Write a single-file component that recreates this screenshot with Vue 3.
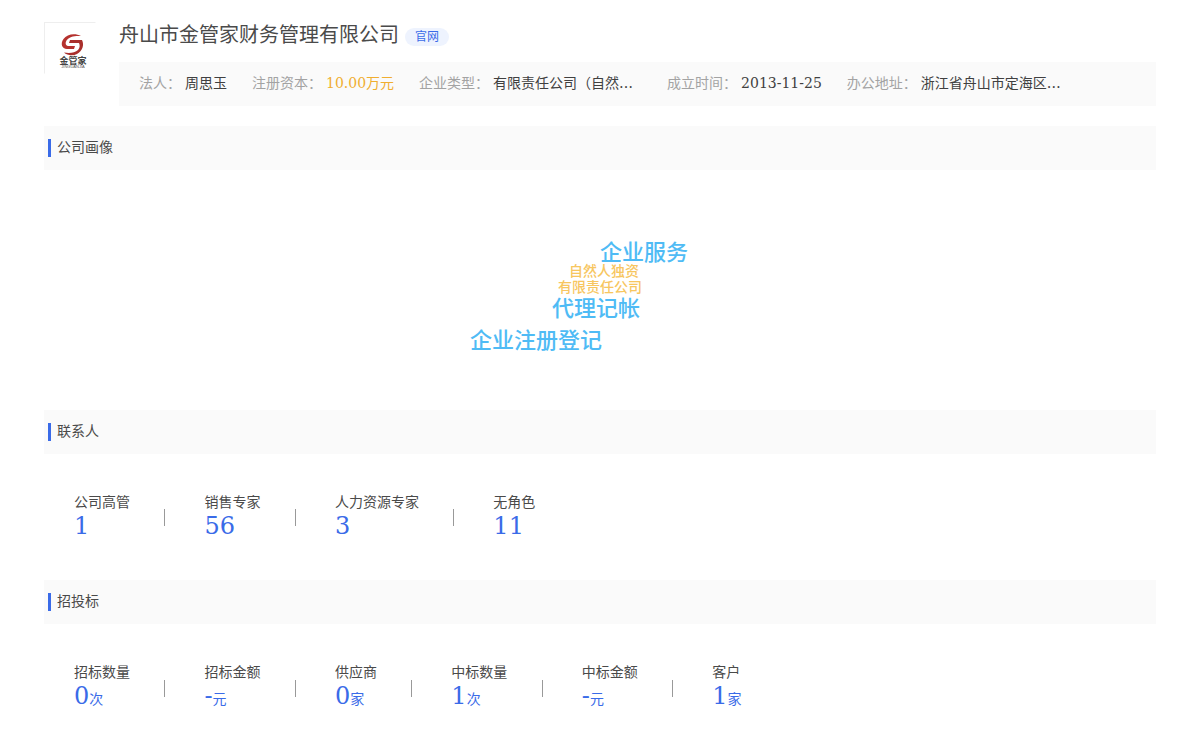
<script setup>
const company = '舟山市金管家财务管理有限公司'

const facts = [
  { label: '法人：', value: '周思玉' },
  { label: '注册资本：', value: '10.00万元', tone: 'accent' },
  { label: '企业类型：', value: '有限责任公司（自然…', tone: 'wide' },
  { label: '成立时间：', value: '2013-11-25' },
  { label: '办公地址：', value: '浙江省舟山市定海区…', tone: 'wide' },
]

const words = [
  { text: '企业服务', tone: 'major', x: 44, y: 68 },
  { text: '自然人独资', tone: 'minor', x: 4, y: 92 },
  { text: '有限责任公司', tone: 'minor', x: 0, y: 108 },
  { text: '代理记帐', tone: 'major', x: -4, y: 124 },
  { text: '企业注册登记', tone: 'major', x: -64, y: 156 },
]

const contacts = [
  { label: '公司高管', value: '1' },
  { label: '销售专家', value: '56' },
  { label: '人力资源专家', value: '3' },
  { label: '无角色', value: '11' },
]

const bids = [
  { label: '招标数量', value: '0', unit: '次' },
  { label: '招标金额', value: '-', unit: '元' },
  { label: '供应商', value: '0', unit: '家' },
  { label: '中标数量', value: '1', unit: '次' },
  { label: '中标金额', value: '-', unit: '元' },
  { label: '客户', value: '1', unit: '家' },
]

const groups = [
  { title: '联系人', stats: contacts },
  { title: '招投标', stats: bids },
]
</script>

<template>
  <main class="page" lang="zh-CN">
    <header class="company">
      <div class="logo">
        <svg viewBox="0 0 50 50" role="img" aria-label="金管家">
          <path d="M36 13C30 10 22 11 18.500 16C15 21 17 25.500 22 26L29 26L30 23L23 23C20.500 22.500 20 20 21.500 17.500C24 13.500 30 12.500 36 13Z" fill="#b5322f" />
          <path d="M25 17L37 17C39.500 22 37.500 28 32 31C28 33 22 32.500 19 29.500C24 30.500 30 30 33 27C35 25 35 22 34 20L24 20Z" fill="#a92f2c" />
          <text x="28" y="41" class="logo-name">金管家</text>
          <text x="28" y="45" class="logo-sub">JINGUANJIA</text>
        </svg>
      </div>
      <div class="summary">
        <div class="title-row">
          <h1>{{ company }}</h1>
          <a href="#" class="site">官网</a>
        </div>
        <dl class="facts">
          <div v-for="fact in facts" :key="fact.label" class="fact">
            <dt>{{ fact.label }}</dt>
            <dd :class="fact.tone">{{ fact.value }}</dd>
          </div>
        </dl>
      </div>
    </header>

    <section>
      <h2>公司画像</h2>
      <div class="cloud">
        <span
          v-for="word in words"
          :key="word.text"
          class="word"
          :class="word.tone"
          :style="{ left: `calc(50% + ${word.x}px)`, top: `${word.y}px` }"
        >{{ word.text }}</span>
      </div>
    </section>

    <section v-for="group in groups" :key="group.title">
      <h2>{{ group.title }}</h2>
      <ul class="stats">
        <li v-for="(stat, index) in group.stats" :key="stat.label">
          <div class="stat">
            <div class="label">{{ stat.label }}</div>
            <div class="value">{{ stat.value }}<span v-if="stat.unit" class="unit">{{ stat.unit }}</span></div>
          </div>{{ ' ' }}<span v-if="index < group.stats.length - 1" class="divider"></span>
        </li>
      </ul>
    </section>
  </main>
</template>

<style>
body {
  margin: 0;
  background: #fff;
}
</style>

<style scoped>
.page {
  padding: 22px 44px;
  font-family: "DejaVu Serif", "Noto Sans CJK SC", serif;
  font-size: 14px;
  font-weight: 400;
  line-height: 20px;
  color: #4a4a4a;
}

.company {
  display: flex;
  gap: 23px;
  margin-bottom: 20px;
}

.logo {
  flex: none;
  box-sizing: border-box;
  width: 52px;
  height: 52px;
  border: 1px solid #eee;
  border-right-color: #fff;
  border-bottom-color: #fff;
}

.logo svg {
  display: block;
  width: 50px;
  height: 50px;
}

.logo-name {
  font: 700 9px "Noto Sans CJK SC", sans-serif;
  text-anchor: middle;
  fill: #444;
}

.logo-sub {
  font: 4px "Liberation Sans", sans-serif;
  text-anchor: middle;
  fill: #555;
}

.summary {
  flex: 1;
  min-width: 0;
}

.title-row {
  display: flex;
  align-items: center;
  gap: 6px;
  height: 26px;
  margin-bottom: 14px;
}

h1 {
  margin: 0;
  font-size: 20px;
  font-weight: inherit;
  line-height: 24px;
}

.site {
  margin-top: 4px;
  padding: 0 10px;
  border-radius: 10px;
  background: #eef3fe;
  color: #3a6be8;
  font-size: 12px;
  line-height: 18px;
  text-decoration: none;
}

.facts {
  display: flex;
  gap: 25px;
  margin: 0;
  padding: 11px 20px 13px;
  background: #fafafa;
  white-space: nowrap;
}

.fact {
  display: flex;
  gap: 4px;
}

dt {
  color: #a3a3a3;
}

dd {
  margin: 0;
  color: #404040;
}

.accent {
  color: #f0ae30;
}

.wide {
  width: 149px;
}

h2 {
  display: flex;
  align-items: center;
  gap: 6px;
  margin: 0;
  padding: 11px 4px 13px;
  background: #fafafa;
  font-size: 14px;
  font-weight: inherit;
}

h2::before {
  content: "";
  width: 3px;
  height: 18px;
  margin-top: 2px;
  background: #3a6be8;
}

.cloud {
  position: relative;
  height: 240px;
  font-family: "Noto Sans CJK SC", sans-serif;
  font-weight: 500;
  white-space: nowrap;
}

.word {
  position: absolute;
  transform: translateX(-50%);
}

.major {
  color: #4fbbf5;
  font-size: 22px;
  line-height: 24px;
}

.minor {
  color: #f7c660;
  font-size: 14px;
  line-height: 16px;
}

.stats {
  display: flex;
  flex-wrap: wrap;
  margin: 0;
  padding: 38px 30px;
  list-style: none;
}

.stat {
  display: inline-block;
  vertical-align: middle;
}

.value {
  padding-bottom: 2px;
  color: #3a6be8;
  font-size: 24px;
  line-height: 28px;
}

.unit {
  font-size: 14px;
}

.divider {
  display: inline-block;
  width: 1px;
  height: 17px;
  margin: 0 39px 0 30px;
  background: #999;
  vertical-align: middle;
}
</style>
